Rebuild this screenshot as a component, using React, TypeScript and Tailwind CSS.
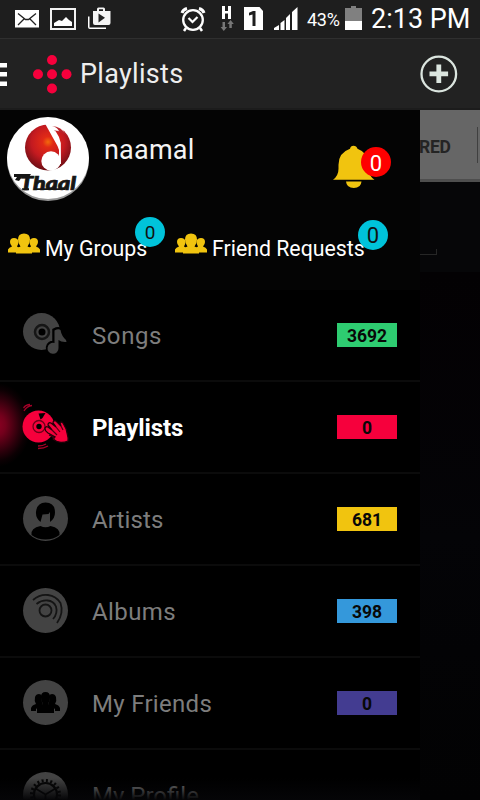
import React from "react";

function StatusBar() {
  return (
    <div className="flex h-[38px] shrink-0 items-start bg-[#1e1e1e] text-white">
      <svg width="120" height="38" viewBox="0 0 120 38">
        <rect x="15" y="10" width="24" height="17.5" fill="#fff" />
        <path d="M18 13.500l7.500 6h3l7.500-6M18 25l6-6M36 25l-6-6" fill="none" stroke="#222" strokeWidth="1.300" />
        <rect x="51" y="9" width="24" height="20" fill="none" stroke="#f2f2f2" strokeWidth="2" />
        <path d="M54 26v-3l5-3 3 1 4-4 3 3 3 2v4z" fill="#fff" />
        <path d="M88 16.500h1.500V27.500H106V29H90q-2 0-2-2z" fill="#fff" />
        <path d="M93 11h4V9q0-1.500 1.500-1.500h5Q105 7.500 105 9v2h5.500v12q0 2-2 2H95q-2 0-2-2zM99 11h4V9.200h-4z" fill="#f4f4f4" />
        <path d="M98.500 13.500v9l6.500-4.700z" fill="#222" />
      </svg>
      <svg className="ml-[58px]" width="125" height="38" viewBox="178 0 125 38">
        <g fill="none" stroke="#fff">
          <circle cx="193" cy="20" r="9.800" strokeWidth="2.300" />
          <path d="M182 13q1-3.500 5-4.500M204 13q-1-3.500-5-4.500" strokeWidth="3" />
          <path d="M186 28l-2 3M200 28l2 3" strokeWidth="2.500" />
          <path d="M188.500 18l4 4 5-5" strokeWidth="2.200" />
        </g>
        <path d="M222 6h3v5h3v-5h3v13h-3v-5.500h-3v5.500h-3z" fill="#fff" />
        <path d="M222.500 22h2.500v5h2l-3.200 4-3.200-4h1.900zM229.300 28h2.500v-4h2l-3.200-4-3.200 4h1.900z" fill="#777" />
        <path d="M244 7h15.500l3.500 4v19h-19z" fill="#fff" />
        <path d="M249 12.700l4-1.700h2.500v15h-3V14.400l-3.500 1z" fill="#1e1e1e" />
        <path d="M274 30v-2l5-3v5zM280.500 30v-7l4-3v10zM286 30V18l4-4v16zM292 30V12l5.500-5v23z" fill="#fff" />
      </svg>
      <span className="ml-[4px] mt-[9px] w-[36px] whitespace-nowrap text-[18px] leading-[22px] tracking-[-0.3px]">43%</span>
      <svg width="24" height="38" viewBox="343 0 24 38">
        <path d="M345 8h6V6h5v2h6v22h-17z" fill="#808080" />
        <path d="M345 21h17v9h-17z" fill="#fff" />
      </svg>
      <span className="ml-[4px] mt-[3px] whitespace-nowrap text-[27px] leading-[32px]">2:13 PM</span>
    </div>
  );
}

function Header() {
  return (
    <header className="flex h-[72px] shrink-0 items-center border-t border-b-2 border-t-[#2f2f2f] border-b-[#1c1c1c] bg-[#222]">
      <svg width="80" height="70" viewBox="0 39 80 70">
        <path d="M0 63h7v4.500H0zM0 72h7v4.500H0zM0 81.500h7V86H0z" fill="#fff" />
        <g fill="#f6003c">
          <circle cx="52" cy="60" r="5" />
          <circle cx="38" cy="74.200" r="5" />
          <circle cx="52" cy="74.200" r="5" />
          <circle cx="66.500" cy="74.200" r="5" />
          <circle cx="52" cy="88.500" r="5" />
        </g>
      </svg>
      <h1 className="whitespace-nowrap text-[27px] leading-[32px] tracking-[0.3px] text-[#eee]">Playlists</h1>
      <button className="mr-[20px] ml-auto">
        <svg width="42" height="42" viewBox="418 54 42 42" fill="none" stroke="#dbe5df">
          <circle cx="438.800" cy="75" r="17.300" strokeWidth="2.300" />
          <path d="M438.800 65.500v18.500M429.500 74.800h18.600" strokeWidth="4.800" />
        </svg>
      </button>
    </header>
  );
}

function Avatar() {
  return (
    <svg width="96" height="100" viewBox="0 110 96 100">
      <defs>
        <radialGradient id="ball" cx="0.5" cy="0.38" r="0.65">
          <stop offset="0" stopColor="#f26a0c" />
          <stop offset="0.18" stopColor="#e12a16" />
          <stop offset="0.55" stopColor="#c41a20" />
          <stop offset="1" stopColor="#620d14" />
        </radialGradient>
        <clipPath id="face"><circle cx="48" cy="158" r="41" /></clipPath>
      </defs>
      <circle cx="48" cy="160" r="41" fill="#999" />
      <circle cx="48" cy="158" r="41" fill="#fff" />
      <circle cx="48" cy="147.500" r="23" fill="url(#ball)" />
      <path d="M45 123.500L57.500 146l1.500 4v14h2l-.2-21q-1-6-5.300-12 5-.5 9 2l-3-6q-8-4.500-16.500-3.500z" fill="#fff" />
      <path d="M52 126q9 0 15 10-6-5-13-5 0-1 5 0-2-4-7-5z" fill="#b9242b" />
      <circle cx="51" cy="161" r="9.700" fill="#fff" />
      <g clipPath="url(#face)">
        <path d="M14 174h17l-2 3h-7l-3 4-4-1 2-3h-3z" fill="#161616" />
        <text x="20" y="190" fontFamily="Lato" fontWeight="900" fontStyle="italic" fontSize="18" textLength="56" lengthAdjust="spacingAndGlyphs" fill="#161616" stroke="#161616" strokeWidth="0.700">Thaal</text>
        <path d="M22 188.300h7v2h-7zM35 188.300h30v1.700H35z" fill="#161616" />
      </g>
    </svg>
  );
}

function GroupIcon() {
  return (
    <svg width="34" height="24" viewBox="0 0 34 24" fill="#f1c40f" className="shrink-0">
      <path d="M1 19.500v-3q1-2 4-3-2-2-2-4.500Q3 5 7 5t4.500 3.500q0 3-1.500 5l3 2v4z" />
      <path d="M33 19.500v-3q-1-2-4-3 2-2 2-4.500 0-4-4-4t-4.500 3.500q0 3 1.500 5l-3 2v4z" />
      <path d="M9 20.500v-4q1-2 4.500-3-2.500-3-2.500-7Q11 .5 17 .5t6 6q0 4-2.500 7 3.500 1 4.500 3v4z" />
    </svg>
  );
}

function Profile() {
  return (
    <section className="h-[180px] shrink-0 bg-[#040404]">
      <div className="flex h-[100px]">
        <Avatar />
        <span className="mt-[23px] ml-[8px] text-[27px] leading-[34px] tracking-[0.2px] text-[#f4f4f4]">naamal</span>
        <div className="relative mt-[33px] mr-[28px] ml-auto h-[48px] w-[60px]">
          <svg width="60" height="48" viewBox="332 143 60 48" fill="#f1c40f">
            <path d="M333 179.800q5.500-4 5.500-11v-4q0-12 11.500-16 .5-3 3.500-3t4 3q11 4 11 16v4q0 7 6 11zM346 181.500h15.500q-.5 6.500-7.700 6.500t-7.800-6.500z" />
          </svg>
          <span className="absolute top-[4px] left-[29px] flex h-[30px] w-[30px] items-center justify-center rounded-full bg-[#fe0000] pt-[3px] text-[22px] leading-none text-white">0</span>
        </div>
      </div>
      <div className="flex h-[80px] pt-[23px] text-[21.3px] leading-[32px] text-white">
        <div className="relative flex w-[167px] pl-[7px]">
          <GroupIcon />
          <span className="ml-[4px] whitespace-nowrap">My Groups</span>
          <span className="absolute top-[-16px] left-[135px] flex h-[30px] w-[30px] items-center justify-center rounded-full bg-[#00c3da] pt-[1px] text-[19px] leading-none text-[#111]">0</span>
        </div>
        <div className="relative flex w-[240px] pl-[7px]">
          <GroupIcon />
          <span className="ml-[4px] whitespace-nowrap">Friend Requests</span>
          <span className="absolute top-[-13.5px] left-[191px] flex h-[30px] w-[30px] items-center justify-center rounded-full bg-[#00c3da] pt-[3px] text-[22px] leading-none text-[#111]">0</span>
        </div>
      </div>
    </section>
  );
}

const songs = (
  <>
    <circle cx="18.500" cy="19.500" r="18.500" />
    <circle cx="19" cy="20" r="7" fill="none" stroke="#161616" strokeWidth="2.500" />
    <circle cx="19" cy="20" r="3.500" fill="#000" />
    <path d="M31 30.500V18q4-2 6.500-.5Q38.500 24 43 28l.5 2.500q-5 .5-8-2v7.500a5.500 5.500 0 1 1-4.500-5.500z" stroke="#000" strokeWidth="3.500" />
    <path d="M31.500 31V18.500q4-2 6-.5Q38.500 24 43 28l.5 2q-5 .5-8-2v8a5.500 5.500 0 1 1-4-5z" />
  </>
);

const playlists = (
  <>
    <circle cx="15.500" cy="22.500" r="16" />
    <circle cx="16" cy="22.500" r="6" fill="none" stroke="#6d0019" strokeWidth="1.300" />
    <circle cx="16" cy="22.500" r="2.700" fill="#000" />
    <path d="M15.500 9.500l7-.5-3 5-2 1.500z" fill="#000" />
    <path d="M1 7Q4 2 9 1.500M.5 4Q3 .5 7 .5M15 42q5 0 8-2M15 44.500q6 0 10-2.500" fill="none" stroke="#a40028" strokeWidth="1.300" />
    <path d="M22 25q0-3 3-2l4 3-4-5q0-3 3-2l5 4-3-4q0-3 3-2l5 5-1-3q1-2 3 0 4 6 4.500 12 1 3 .5 6-3 1.500-7 1.500-5-.5-8-3.500l2-2-7-4q-3-2-3-4z" stroke="#200008" strokeWidth="1.300" />
    <path d="M29 26l5 5M33 23l4 5M38 22l2 4" stroke="#50000f" strokeWidth="1.200" />
    <path d="M26 31q5 1 5 5" fill="none" stroke="#400010" strokeWidth="1.500" />
  </>
);

const artists = (
  <>
    <circle cx="22.500" cy="22.500" r="22.500" />
    <path d="M17.500 26q-5-4-4.500-10 1-9.500 9.500-9.500 9.500 0 9.500 10 0 6-5 9.500v-10l-1.500 2-6 .5z" fill="#000" />
    <path d="M8.500 39q-1-7 9-9 5 2.500 10 0 10 2 9 9-6 4.500-14 4.500t-14-4.500z" fill="#000" />
  </>
);

const albums = (
  <>
    <circle cx="22.500" cy="22.500" r="22.500" />
    <g fill="none" stroke="#141414" strokeWidth="1.800">
      <circle cx="22.500" cy="22.500" r="6" />
      <path d="M13.500 16q5-4 11-3.500t8.500 6q2 7-3 12.500M10 12q7-6 15-5t12.500 8q3.500 10-3.500 20" />
    </g>
  </>
);

const friends = (
  <>
    <circle cx="22.500" cy="22.500" r="22.500" />
    <g fill="#000">
      <path d="M8 31v-3q1-3 5-4-2-3-1-7 1-3 4-3 2 0 3 2-1 5 1 8l-7 5v2zM37 31v-3q-1-3-5-4 2-3 1-7-1-3-4-3-2 0-3 2 1 5-1 8l7 5v2z" />
      <path d="M14 33v-5q1-3 6-4-2-3-2-7 0-5 4.500-5t4.500 5q0 4-2 7 5 1 6 4v5z" />
    </g>
  </>
);

const profile = (
  <>
    <circle cx="22.500" cy="22.500" r="22.500" />
    <g fill="none" stroke="#070707">
      <circle cx="22.500" cy="22.500" r="14" strokeWidth="3" strokeDasharray="2 2.400" />
      <circle cx="22.500" cy="22.500" r="11.500" strokeWidth="2.200" />
      <path d="M22.500 22.500l-10-6M22.500 22.500l10-6M22.500 22.500v10" strokeWidth="1.800" />
    </g>
  </>
);

const items = [
  { label: "Songs", icon: songs, count: "3692", color: "bg-[#2ecc71]", spacing: "tracking-[0.6px]" },
  { label: "Playlists", icon: playlists, count: "0", color: "bg-[#f6003c]", spacing: "tracking-[-0.1px]" },
  { label: "Artists", icon: artists, count: "681", color: "bg-[#f1c40f]", spacing: "tracking-[0.1px]" },
  { label: "Albums", icon: albums, count: "398", color: "bg-[#3498db]", spacing: "tracking-[0.4px]" },
  { label: "My Friends", icon: friends, count: "0", color: "bg-[#433c91]", spacing: "tracking-[0.3px]" },
  { label: "My Profile", icon: profile, count: "", color: "", spacing: "tracking-[0px]" },
];

function Menu() {
  return (
    <nav className="relative min-h-0 flex-1 overflow-hidden bg-black">
      {items.map((item, i) => {
        const active = i === 1;
        return (
          <div
            key={item.label}
            className={
              "flex h-[92px] items-center border-b-2 border-[#0b0b0b] pl-[23px] " +
              (active ? "bg-[radial-gradient(ellipse_34px_42px_at_-3px_43px,#8c0022_0%,#74001c_25%,#2c000b_65%,#0c0003_85%,transparent_100%)]" : "")
            }
          >
            <svg width="45" height="45" viewBox="0 0 45 45" className="mb-[2px] shrink-0 overflow-visible" fill={active ? "#f6003c" : "#434343"}>
              {item.icon}
            </svg>
            <span
              className={
                "mt-[2px] ml-[24px] whitespace-nowrap text-[24px] leading-[30px] " +
                item.spacing +
                (active ? " font-bold text-white" : " text-[#7d7d7d]")
              }
            >
              {item.label}
            </span>
            {item.count && (
              <span className={"mr-[23px] ml-auto h-[24px] w-[60px] text-center text-[17.5px] leading-[26px] font-bold text-[#080808] " + item.color}>
                {item.count}
              </span>
            )}
          </div>
        );
      })}
      <div className="absolute bottom-0 left-0 h-[22px] w-full bg-gradient-to-b from-transparent to-[#050507]" />
    </nav>
  );
}

function Behind() {
  return (
    <aside className="flex flex-1 flex-col overflow-hidden bg-[#040407]">
      <div className="flex h-[72px] shrink-0 items-center justify-between border-b-[3px] border-[#4e4e4e] bg-[#666]">
        <span className="mt-[4px] ml-[-1px] text-[17.5px] leading-[24px] font-bold tracking-[-0.3px] text-[#242424]">RED</span>
        <span className="mr-[2px] h-[36px] w-px bg-[#404040]" />
      </div>
      <div className="h-[90px] shrink-0 bg-[#060608]">
        <div className="mt-[67px] h-[6px] w-[17px] border-r border-b border-[#262626]" />
      </div>
      <div className="flex-1 bg-gradient-to-b from-[#030103] via-[#040407] to-[#020203]" />
    </aside>
  );
}

export default function App() {
  return (
    <main className="flex h-[800px] w-[480px] flex-col overflow-hidden bg-black font-['Roboto',sans-serif]">
      <StatusBar />
      <Header />
      <div className="flex min-h-0 flex-1">
        <div className="flex w-[420px] shrink-0 flex-col">
          <Profile />
          <Menu />
        </div>
        <Behind />
      </div>
    </main>
  );
}
